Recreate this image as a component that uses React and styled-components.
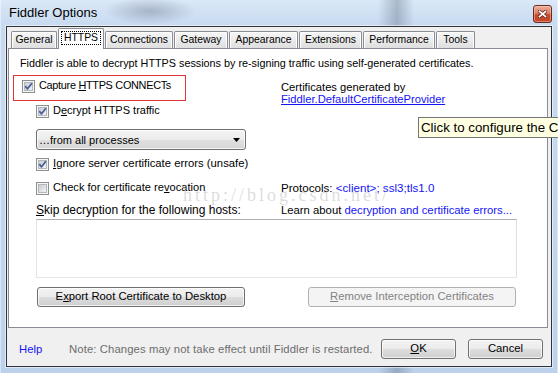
import React from "react";
import styled, { createGlobalStyle } from "styled-components";

const SANS = `"Liberation Sans", Arial, sans-serif`;
const LINK = "#1414f5";

const GlobalStyle = createGlobalStyle`
  html, body { margin: 0; padding: 0; background: #ffffff; }
  body { font-family: ${SANS}; }
`;

const Window = styled.div`
  position: relative;
  width: 558px;
  height: 373px;
  box-sizing: border-box;
  padding: 0 6px 6px;
  display: flex;
  flex-direction: column;
  overflow: hidden;
  font-family: ${SANS};
  font-size: 11.2px;
  color: #000;
  background:
    linear-gradient(90deg, rgba(255,255,255,0.85) 0, rgba(255,255,255,0) 1px, rgba(255,255,255,0) calc(100% - 1px), rgba(255,255,255,0.85) 100%),
    radial-gradient(ellipse 46px 14px at 150px 11px, rgba(75,88,108,0.32), rgba(75,88,108,0) 100%),
    linear-gradient(90deg, rgba(70,85,110,0) 378px, rgba(70,85,110,0.32) 397px, rgba(70,85,110,0) 414px),
    linear-gradient(180deg, #dae8f7 0, #c7daf0 26px, #bcd2ec 100%);
`;

const TitleBar = styled.div`
  height: 26px;
  display: flex;
  align-items: flex-start;
  justify-content: space-between;
`;

const Title = styled.div`
  padding-left: 3px;
  font-size: 13px;
  line-height: 26px;
  color: #000;
`;

const CloseButton = styled.div`
  width: 19px;
  height: 18px;
  margin-top: 5px;
  box-sizing: border-box;
  border: 1px solid #6e2a1c;
  border-radius: 3px;
  background: linear-gradient(180deg, #ebb2a2 0%, #dd7d64 45%, #c9482a 55%, #c5472a 100%);
  box-shadow: inset 0 0 0 1px rgba(255, 210, 195, 0.45);
  display: flex;
  align-items: center;
  justify-content: center;
`;

const Client = styled.div`
  flex: 1;
  min-height: 0;
  display: flex;
  flex-direction: column;
  border: 1px solid #2e333a;
  background: #f0f0f0;
  box-shadow: 0 0 0 1px rgba(255, 255, 255, 0.55);
`;

const TabArea = styled.div`
  margin: 0 3px 0 1px;
  display: flex;
  flex-direction: column;
`;

const TabStrip = styled.div`
  position: relative;
  z-index: 2;
  display: flex;
  align-items: flex-end;
  gap: 1px;
  height: 22px;
  padding-left: 3px;
  margin-bottom: -1px;
`;

const Tab = styled.div`
  box-sizing: border-box;
  width: ${(p) => p.$w}px;
  height: ${(p) => (p.$active ? 21 : 17)}px;
  margin-bottom: ${(p) => (p.$active ? 0 : 1)}px;
  border: 1px solid #898c95;
  border-bottom: none;
  border-radius: 2px 2px 0 0;
  background: ${(p) =>
    p.$active
      ? "#ffffff"
      : "linear-gradient(180deg, #f6f6f6 0%, #ebebeb 50%, #dedede 100%)"};
  box-shadow: ${(p) => (p.$active ? "none" : "inset 1px 1px 0 #fdfdfd, inset -1px 0 0 #fdfdfd")};
  font-size: 10.4px;
  line-height: 16px;
  text-align: center;
  padding-top: ${(p) => (p.$active ? 1 : 0)}px;
  white-space: nowrap;
`;

const FocusRing = styled.span`
  display: inline-block;
  border: 1px dotted #000;
  padding: 0 2px;
  line-height: 12px;
`;

const Panel = styled.div`
  height: 280px;
  box-sizing: border-box;
  border: 1px solid #898c95;
  background: #ffffff;
  padding: 7px 0 0 4px;
  display: flex;
  flex-direction: column;
`;

const Intro = styled.div`
  margin-left: 7px;
  font-size: 10.8px;
  line-height: 15px;
  white-space: nowrap;
`;

const Columns = styled.div`
  display: flex;
  margin-top: 4px;
`;

const LeftCol = styled.div`
  width: 268px;
  display: flex;
  flex-direction: column;
`;

const RightCol = styled.div`
  flex: 1;
  display: flex;
  flex-direction: column;
`;

const CaptureBox = styled.div`
  width: 173px;
  height: 26px;
  box-sizing: border-box;
  border: 1px solid #e2353a;
  padding: 2px 0 0 8px;
`;

const CheckRow = styled.div`
  display: flex;
  align-items: flex-start;
  gap: 4px;
  margin-top: ${(p) => p.$mt || 0}px;
  margin-left: ${(p) => p.$indent || 0}px;
  line-height: 15px;
  white-space: nowrap;
`;

const Label = styled.span`
  font-size: ${(p) => p.$size || 11.2}px;
  letter-spacing: ${(p) => p.$ls || 0}px;
`;

const BoxSvg = styled.svg`
  flex: none;
  margin-top: 2px;
  display: block;
`;

const Mn = styled.span`
  text-decoration: underline;
  text-underline-offset: 1px;
`;

const Select = styled.div`
  margin: 11px 0 0 23px;
  width: 210px;
  height: 21px;
  box-sizing: border-box;
  border: 1px solid #707070;
  border-radius: 3px;
  background: linear-gradient(180deg, #f4f4f4 0%, #ececec 50%, #e0e0e0 51%, #d6d6d6 100%);
  box-shadow: inset 0 0 0 1px rgba(255, 255, 255, 0.75);
  display: flex;
  align-items: center;
  justify-content: space-between;
  padding: 0 5px 0 2px;
  font-size: 11px;
  white-space: nowrap;
`;

const SkipLabel = styled.div`
  margin: 8px 0 0 23px;
  font-size: 12px;
  line-height: 15px;
  white-space: nowrap;
`;

const CertBlock = styled.div`
  margin-top: 6px;
  line-height: 12px;
  font-size: 11.2px;
`;

const LinkText = styled.span`
  color: ${LINK};
  text-decoration: ${(p) => (p.$underline ? "underline" : "none")};
  text-underline-offset: 1px;
`;

const InfoLine = styled.div`
  margin-top: ${(p) => p.$mt}px;
  line-height: 15px;
  font-size: ${(p) => p.$size || 11.2}px;
  white-space: nowrap;
`;

const HostsBox = styled.div`
  margin: 1px 0 0 23px;
  width: 481px;
  height: 59px;
  box-sizing: border-box;
  border: 1px solid;
  border-color: #abadb3 #dbdfe6 #e3e9ef #e2e3ea;
  background: #ffffff;
`;

const ButtonRow = styled.div`
  display: flex;
  justify-content: space-between;
  margin: 9px 0 0 24px;
  width: 479px;
`;

const Button = styled.div`
  box-sizing: border-box;
  width: ${(p) => p.$w}px;
  height: 20px;
  border: 1px solid ${(p) => (p.$disabled ? "#adb2b5" : "#707070")};
  border-radius: 3px;
  background: ${(p) =>
    p.$disabled
      ? "#f4f4f4"
      : "linear-gradient(180deg, #f3f3f3 0%, #ebebeb 50%, #dddddd 51%, #cfcfcf 100%)"};
  box-shadow: ${(p) => (p.$disabled ? "none" : "inset 0 0 0 1px rgba(255,255,255,0.7)")};
  color: ${(p) => (p.$disabled ? "#838383" : "#000")};
  font-size: 11.3px;
  line-height: 17px;
  text-align: center;
  white-space: nowrap;
  margin-left: ${(p) => p.$ml || 0}px;
`;

const Footer = styled.div`
  flex: 1;
  display: flex;
  align-items: center;
  padding: 4px 8px 0 12px;
  font-size: 11.3px;
  line-height: 15px;
`;

const Help = styled.div`
  width: 50px;
  color: ${LINK};
`;

const Note = styled.div`
  flex: 1;
  color: #6d6d6d;
  white-space: nowrap;
  letter-spacing: 0.1px;
`;

const Tooltip = styled.div`
  position: absolute;
  left: 418px;
  top: 117px;
  height: 21px;
  box-sizing: border-box;
  border: 1px solid #767676;
  background: #ffffe1;
  padding: 0 4px 0 2px;
  font-size: 13.3px;
  line-height: 19px;
  white-space: nowrap;
`;

const Watermark = styled.div`
  position: absolute;
  left: 183px;
  top: 185px;
  font-family: "Liberation Serif", "Times New Roman", serif;
  font-size: 18px;
  letter-spacing: 3px;
  color: rgba(170, 170, 170, 0.42);
  white-space: nowrap;
  pointer-events: none;
`;

function CheckBox({ checked }) {
  return (
    <BoxSvg width="13" height="13" viewBox="0 0 13 13">
      <defs>
        <linearGradient id="cbFill" x1="0" y1="0" x2="1" y2="1">
          <stop offset="0" stopColor="#c6cbd1" />
          <stop offset="1" stopColor="#f5f5f5" />
        </linearGradient>
      </defs>
      <rect x="0.5" y="0.5" width="12" height="12" fill="#f6f6f6" stroke="#8e8f8f" />
      <rect x="2.5" y="2.5" width="8" height="8" fill="url(#cbFill)" stroke="#b3b8be" />
      {checked && (
        <path d="M3.3 6.2 L5.5 8.8 L9.9 3.2" fill="none" stroke="#4a5f9c" strokeWidth="1.8" strokeLinejoin="round" />
      )}
    </BoxSvg>
  );
}

const TABS = [
  ["General", 46],
  ["HTTPS", 46],
  ["Connections", 68],
  ["Gateway", 54],
  ["Appearance", 69],
  ["Extensions", 63],
  ["Performance", 72],
  ["Tools", 39],
];

export default function App() {
  return (
    <>
      <GlobalStyle />
      <Window>
        <TitleBar>
          <Title>Fiddler Options</Title>
          <CloseButton>
            <svg width="9" height="8" viewBox="0 0 9 8">
              <path d="M1.5 1.5 L7.5 6.5 M7.5 1.5 L1.5 6.5" stroke="#5a1e10" strokeWidth="3.2" strokeLinecap="square" />
              <path d="M1.5 1.5 L7.5 6.5 M7.5 1.5 L1.5 6.5" stroke="#ffffff" strokeWidth="1.7" strokeLinecap="square" />
            </svg>
          </CloseButton>
        </TitleBar>
        <Client>
          <TabArea>
            <TabStrip>
              {TABS.map(([name, w]) =>
                name === "HTTPS" ? (
                  <Tab key={name} $w={w} $active>
                    <FocusRing>{name}</FocusRing>
                  </Tab>
                ) : (
                  <Tab key={name} $w={w}>
                    {name}
                  </Tab>
                )
              )}
            </TabStrip>
            <Panel>
              <Intro>
                Fiddler is able to decrypt HTTPS sessions by re-signing traffic using self-generated certificates.
              </Intro>
              <Columns>
                <LeftCol>
                  <CaptureBox>
                    <CheckRow>
                      <CheckBox checked />
                      <Label $size={10.9} $ls={-0.3}>
                        Capture <Mn>H</Mn>TTPS CONNECTs
                      </Label>
                    </CheckRow>
                  </CaptureBox>
                  <CheckRow $mt={2} $indent={23}>
                    <CheckBox checked />
                    <Label $size={11}>
                      D<Mn>e</Mn>crypt HTTPS traffic
                    </Label>
                  </CheckRow>
                  <Select>
                    <span>…from all processes</span>
                    <svg width="7" height="4" viewBox="0 0 7 4">
                      <polygon points="0,0 7,0 3.5,4" fill="#000" />
                    </svg>
                  </Select>
                  <CheckRow $mt={6} $indent={23}>
                    <CheckBox checked />
                    <Label $size={11.3}>
                      <Mn>I</Mn>gnore server certificate errors (unsafe)
                    </Label>
                  </CheckRow>
                  <CheckRow $mt={9} $indent={23}>
                    <CheckBox />
                    <Label $size={11.1}>
                      Check for certificate re<Mn>v</Mn>ocation
                    </Label>
                  </CheckRow>
                  <SkipLabel>
                    <Mn>S</Mn>kip decryption for the following hosts:
                  </SkipLabel>
                </LeftCol>
                <RightCol>
                  <CertBlock>
                    <div>Certificates generated by</div>
                    <LinkText $underline>Fiddler.DefaultCertificateProvider</LinkText>
                  </CertBlock>
                  <InfoLine $mt={75} $size={11.6}>
                    Protocols: <LinkText>&lt;client&gt;; ssl3;tls1.0</LinkText>
                  </InfoLine>
                  <InfoLine $mt={8} $size={11.3}>
                    Learn about <LinkText>decryption and certificate errors...</LinkText>
                  </InfoLine>
                </RightCol>
              </Columns>
              <HostsBox />
              <ButtonRow>
                <Button $w={208}>
                  E<Mn>x</Mn>port Root Certificate to Desktop
                </Button>
                <Button $w={208} $disabled>
                  <Mn>R</Mn>emove Interception Certificates
                </Button>
              </ButtonRow>
            </Panel>
          </TabArea>
          <Footer>
            <Help>Help</Help>
            <Note>Note: Changes may not take effect until Fiddler is restarted.</Note>
            <Button $w={75}>
              <Mn>O</Mn>K
            </Button>
            <Button $w={75} $ml={12}>
              Cancel
            </Button>
          </Footer>
        </Client>
        <Watermark>http://blog.csdn.net/</Watermark>
        <Tooltip>Click to configure the Certificate Provider</Tooltip>
      </Window>
    </>
  );
}
